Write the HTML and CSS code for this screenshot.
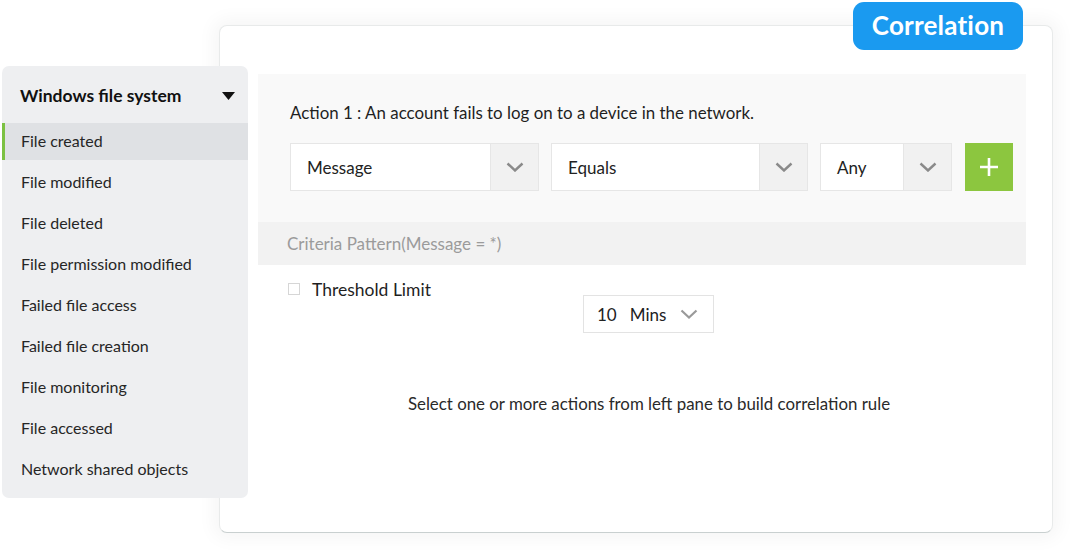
FILE: index.html
```html
<!DOCTYPE html>
<html>
<head>
<meta charset="utf-8">
<link rel="stylesheet" href="styles.css">
</head>
<body>
<div class="stage">
  <div class="card">
    <div class="panel">
      <div class="panel-top">
        <div class="action">Action 1 : An account fails to log on to a device in the network.</div>
        <div class="selects">
          <div class="select s1"><span class="val">Message</span><span class="chev"><svg width="18" height="10" viewBox="0 0 18 10"><path d="M1.5 1.5 L9 8.5 L16.5 1.5" fill="none" stroke="#8a8a8a" stroke-width="2.4"/></svg></span></div>
          <div class="select s2"><span class="val">Equals</span><span class="chev"><svg width="18" height="10" viewBox="0 0 18 10"><path d="M1.5 1.5 L9 8.5 L16.5 1.5" fill="none" stroke="#8a8a8a" stroke-width="2.4"/></svg></span></div>
          <div class="select s3"><span class="val">Any</span><span class="chev"><svg width="18" height="10" viewBox="0 0 18 10"><path d="M1.5 1.5 L9 8.5 L16.5 1.5" fill="none" stroke="#8a8a8a" stroke-width="2.4"/></svg></span></div>
          <div class="add"><svg width="20" height="20" viewBox="0 0 20 20"><path d="M10 1 V19 M1 10 H19" stroke="#fff" stroke-width="2.6"/></svg></div>
        </div>
      </div>
      <div class="criteria">Criteria Pattern(Message = *)</div>
    </div>
    <div class="threshold">
      <span class="check"></span><span class="tlabel">Threshold Limit</span>
    </div>
    <div class="mins-row">
      <div class="mins"><span>10</span><span class="unit">Mins</span><svg width="18" height="10" viewBox="0 0 18 10"><path d="M1.5 1.5 L9 8.5 L16.5 1.5" fill="none" stroke="#9a9a9a" stroke-width="2.2"/></svg></div>
    </div>
    <div class="hint">Select one or more actions from left pane to build correlation rule</div>
  </div>

  <div class="badge">Correlation</div>

  <div class="sidebar">
    <div class="side-head"><span>Windows file system</span><svg width="13" height="8" viewBox="0 0 13 8"><path d="M0 0 H13 L6.5 8 Z" fill="#111"/></svg></div>
    <ul class="side-list">
      <li class="active">File created</li>
      <li>File modified</li>
      <li>File deleted</li>
      <li>File permission modified</li>
      <li>Failed file access</li>
      <li>Failed file creation</li>
      <li>File monitoring</li>
      <li>File accessed</li>
      <li>Network shared objects</li>
    </ul>
  </div>
</div>
</body>
</html>
```

FILE: styles.css
```css
* { box-sizing: border-box; }
html, body { margin: 0; padding: 0; background: #fff; }
body { font-family: Lato, "Noto Sans", sans-serif; color: #222; width: 1078px; height: 558px; overflow: hidden; }

.stage { position: relative; width: 1078px; height: 558px; padding: 25px 0 0 219px; }

.card {
  width: 834px;
  height: 508px;
  background: #fff;
  border: 1px solid #e8eaea;
  border-bottom: 1px solid #c9d0d0;
  border-radius: 8px;
  box-shadow: 0 0 18px 6px rgba(0,0,0,0.04);
  padding: 48px 0 0 38px;
}

.panel { width: 768px; background: #f9f9f9; }
.panel-top { padding: 28px 0 31px 32px; }
.action { font-size: 16.9px; line-height: 22px; color: #1f1f1f; }
.selects { display: flex; margin-top: 19px; height: 48px; }
.select {
  display: flex; height: 48px; background: #fff;
  border: 1px solid #e6e6e6;
}
.select .val { flex: 1; padding-left: 16px; font-size: 17px; line-height: 48px; color: #222; }
.select .chev {
  width: 48px; background: #f1f1f1; border-left: 1px solid #e6e6e6;
  display: flex; align-items: center; justify-content: center;
}
.s1 { width: 249px; margin-right: 12px; }
.s2 { width: 257px; margin-right: 12px; }
.s3 { width: 132px; margin-right: 13px; }
.add {
  width: 48px; height: 48px; background: #8cc63f;
  display: flex; align-items: center; justify-content: center;
}

.criteria {
  height: 43px; background: #f2f2f2; padding-left: 29px;
  font-size: 17px; line-height: 43px; color: #9b9b9b;
}

.threshold { display: flex; align-items: center; margin-top: 14px; padding-left: 30px; height: 20px; }
.check { width: 12px; height: 12px; border: 1px solid #d6d6d6; background: #fff; margin-right: 12px; }
.tlabel { font-size: 17.5px; color: #1f1f1f; }

.mins-row { display: flex; padding-left: 325px; margin-top: -4px; }
.mins {
  width: 131px; height: 38px; border: 1px solid #e3e3e3; background: #fff;
  display: flex; align-items: center; padding-left: 13px; font-size: 17px; color: #222;
}
.mins .unit { margin-left: 13px; margin-right: 14px; }

.hint { margin-top: 60px; width: 834px; margin-left: -38px; padding-left: 24px; text-align: center; font-size: 16.85px; color: #2a2a2a; }

.badge {
  position: absolute; left: 853px; top: 2px; width: 170px; height: 48px;
  background: #1a9af0; border-radius: 11px; color: #fff;
  font-size: 26px; font-weight: 700; text-align: center; line-height: 47px; letter-spacing: 0.2px;
}

.sidebar {
  position: absolute; left: 2px; top: 66px; width: 246px; height: 432px;
  background: #eeeff1; border-radius: 7px;
}
.side-head {
  display: flex; align-items: center; justify-content: space-between;
  height: 57px; padding: 2px 13px 0 18px;
  font-size: 17.5px; font-weight: 700; color: #111;
}
.side-list { list-style: none; margin: 0; padding: 0; }
.side-list li {
  height: 41px; line-height: 35px; padding-left: 19px; font-size: 16px; color: #262626;
}
.side-list li.active { background: #dfe1e4; border-left: 3px solid #7cc142; padding-left: 16px; height: 37px; margin-bottom: 4px; line-height: 35px; }
```
